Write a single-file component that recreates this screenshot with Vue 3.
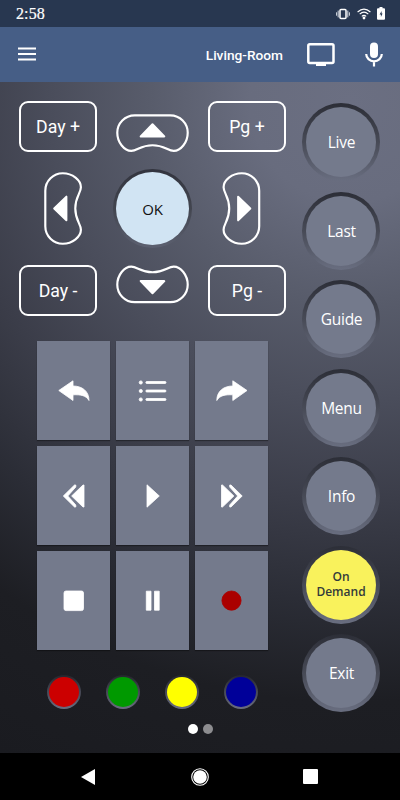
<template>
  <div class="screen">
    <header class="status">
      <span class="clock">2:58</span>
      <div class="status-icons">
        <svg class="vibrate" width="14" height="12" viewBox="0 0 14 12">
          <rect x="4" y="1.5" width="6" height="9" rx="1" fill="none" stroke="#fff" stroke-width="1.5" />
          <path d="M2.2 2.6v6.8M11.8 2.6v6.8M.6 4.3v3.4M13.4 4.3v3.4" stroke="#d9dde4" stroke-width="1" />
        </svg>
        <svg class="wifi" width="14" height="12" viewBox="0 0 14 12">
          <g fill="none" stroke="#fff" stroke-width="1.1">
            <path d="M.6 4Q7-1.9 13.4 4M2.7 6.2Q7 2.2 11.3 6.2M4.8 8.3Q7 6.3 9.2 8.3" />
          </g>
          <circle cx="7" cy="10" r="1.4" fill="#fff" />
        </svg>
        <svg width="8" height="13" viewBox="0 0 8 13">
          <path d="M2.5 0h3v1.2H7q1 0 1 1v9.6q0 1-1 1H1q-1 0-1-1V2.200q0-1 1-1h1.500z" fill="#fff" />
          <path d="M4.600 4L2.600 7.400H3.900V10L5.600 6.500H4.600z" fill="#263650" />
        </svg>
      </div>
    </header>

    <nav class="appbar">
      <svg class="burger" width="18" height="14" viewBox="0 0 18 14">
        <path d="M0 1.5h18M0 7h18M0 12.500h18" stroke="#fff" stroke-width="2" />
      </svg>
      <span class="room">Living-Room</span>
      <svg class="tv" width="28" height="24" viewBox="0 0 28 24">
        <rect x="1.300" y="1.300" width="25.200" height="18.600" rx="1.500" fill="none" stroke="#fff" stroke-width="2.500" />
        <path d="M9 20h10v3H9z" fill="#fff" />
      </svg>
      <svg class="mic" width="18" height="25" viewBox="0 0 18 25">
        <rect x="5" y="0.500" width="8" height="15.500" rx="4" fill="#fff" />
        <path d="M1.200 12a7.800 7.300 0 0 0 15.600 0M9 19v5.500" fill="none" stroke="#fff" stroke-width="2.200" />
      </svg>
    </nav>

    <main class="remote">
      <section class="left">
        <div class="dpad">
          <button class="box">Day +</button>
          <button class="arrow up">
            <svg width="73" height="38.500" viewBox="0 0 74 39"><path :d="bean" class="line" /><path :d="tip" class="tip" /></svg>
          </button>
          <button class="box">Pg +</button>
          <button class="arrow prev">
            <svg width="38.500" height="73" viewBox="0 0 39 74"><g transform="translate(0 74) rotate(-90)"><path :d="bean" class="line" /><path :d="tip" class="tip" /></g></svg>
          </button>
          <button class="ok">OK</button>
          <button class="arrow next">
            <svg width="38.500" height="73" viewBox="0 0 39 74"><g transform="translate(39 0) rotate(90)"><path :d="bean" class="line" /><path :d="tip" class="tip" /></g></svg>
          </button>
          <button class="box">Day -</button>
          <button class="arrow down">
            <svg width="73" height="38.500" viewBox="0 0 74 39"><g transform="translate(0 39) scale(1 -1)"><path :d="bean" class="line" /><path :d="tip" class="tip" /></g></svg>
          </button>
          <button class="box">Pg -</button>
        </div>

        <div class="keys">
          <button v-for="k in keys" :key="k.name" class="key" :aria-label="k.name">
            <svg width="34" height="24" viewBox="0 0 34 24">
              <path :d="k.d" :fill="k.fill || '#fff'" :stroke="k.fill || '#fff'" stroke-width=".8" stroke-linejoin="round" />
            </svg>
          </button>
        </div>

        <div class="colors">
          <button v-for="c in colors" :key="c" class="color" :class="c" :aria-label="c"></button>
        </div>
      </section>

      <aside class="side">
        <button v-for="s in side" :key="s" class="round" :class="{ demand: s === 'On Demand' }"><span>{{ s }}</span></button>
      </aside>

      <div class="pager"><i class="on"></i><i></i></div>
    </main>

    <footer class="sysnav">
      <svg class="back" width="14" height="16" viewBox="0 0 14 16"><path d="M14 0v16L0 8z" fill="#fff" /></svg>
      <svg class="home" width="18" height="18" viewBox="0 0 18 18">
        <circle cx="9" cy="9" r="8.300" fill="none" stroke="#fff" stroke-width="1.100" />
        <circle cx="9" cy="9" r="6.800" fill="#fff" />
      </svg>
      <i class="recent"></i>
    </footer>
  </div>
</template>

<script setup>
const bean = 'M19 1.300H55C65 1.300 72.700 9.500 72.700 19C72.700 29 65.500 37.400 58.500 37.400C52.500 37.400 49 31.700 37 31.700C25 31.700 21.500 37.400 15.500 37.400C8.500 37.400 1.300 29 1.300 19C1.300 9.500 9 1.300 19 1.300Z'
const tip = 'M37 10.300L49 22.700H25Z'
const side = ['Live', 'Last', 'Guide', 'Menu', 'Info', 'On Demand', 'Exit']
const colors = ['red', 'green', 'yellow', 'blue']
const bar = y => `M10.800 ${y - 1}H29a1 1 0 0 1 0 2H10.800a1 1 0 0 1 0 -2z M4.800 ${y - 1.600}a1.600 1.600 0 1 1 0 3.200a1.600 1.600 0 1 1 0 -3.200z`
const keys = [
  { name: 'back', d: 'M1.800 11.500L16 1.800V7C25 7 32 12 32 21.500C29 16.500 24 15.500 16 15.800V21.500Z' },
  { name: 'list', d: bar(3.500) + bar(12) + bar(20.500) },
  { name: 'forward', d: 'M32 11.500L17.800 1.800V7C8.800 7 1.800 12 1.800 21.500C4.800 16.500 9.800 15.500 17.800 15.800V21.500Z' },
  { name: 'rewind', d: 'M27 1V23H26L14.600 12L26 1ZM17.500 1H18.800V3L10.800 12L18.800 21V23H17.500L6.300 12Z' },
  { name: 'play', d: 'M11 .8L23.300 12L11 23.200Z' },
  { name: 'fast forward', d: 'M6.500 1V23H7.500L18.900 12L7.500 1ZM16 1H14.700V3L22.700 12L14.700 21V23H16L27.200 12Z' },
  { name: 'stop', d: 'M9 2H24.500Q26.500 2 26.500 4V19.600Q26.500 21.600 24.500 21.600H9Q7 21.600 7 19.600V4Q7 2 9 2Z' },
  { name: 'pause', d: 'M10.300 2.200H15V21.200H10.300ZM18.500 2.200H23.200V21.200H18.500Z' },
  { name: 'record', d: 'M16.500 2a9.600 9.600 0 1 1 0 19.200a9.600 9.600 0 1 1 0 -19.200z', fill: '#aa0000' }
]
</script>

<style>
body { margin: 0; }
</style>
<style scoped>
.screen { width: 400px; height: 800px; display: flex; flex-direction: column; overflow: hidden; font-family: Roboto, sans-serif; color: #fff; }
button { padding: 0; margin: 0; border: 0; background: none; color: #fff; font-family: inherit; display: block; box-sizing: border-box; }
svg { display: block; flex: none; }
.status { height: 27px; flex: none; background: #283750; display: flex; align-items: center; justify-content: space-between; padding: 0 15px 0 16px; }
.clock { font: 16px/27px "Liberation Serif", serif; letter-spacing: 0.1px; -webkit-text-stroke: 0.2px #fff; }
.status-icons { display: flex; align-items: center; }
.vibrate { margin-right: 7px; }
.wifi { margin-right: 6px; }
.appbar { height: 55px; flex: none; box-sizing: border-box; background: #465e86; display: flex; align-items: center; padding: 0 17px 0 18px; }
.burger { margin-bottom: 1px; }
.room { margin-left: auto; font-size: 13.700px; font-weight: 500; }
.tv { margin: 0 30px 0 24px; }
.remote { height: 671px; flex: none; display: grid; grid-template-columns: 302px 98px; grid-template-rows: 642px 29px; background: radial-gradient(circle at 350px 20px, #6b6f82 0, #686c7e 100px, #585c6b 200px, #4a4d5b 300px, #3b3d49 400px, #2b2d36 500px, #1d1e23 600px, #1a1b20 100%); }
.dpad { display: grid; grid-template-columns: 78px 73px 78px; grid-template-rows: 51px 73px 51px; column-gap: 19px; row-gap: 20px; padding: 19px 0 0 19px; }
.box { border: 2px solid #fff; border-radius: 9px; font-size: 17.700px; }
.line { fill: none; stroke: #fff; stroke-width: 2.200px; }
.tip { fill: #fff; stroke: #fff; stroke-width: 2px; stroke-linejoin: round; }
.up { align-self: end; }
.down { align-self: start; }
.prev { justify-self: center; margin-left: 10px; }
.next { justify-self: center; margin-right: 11px; }
.ok { width: 79px; height: 79px; margin: -3px; border-radius: 50%; border: 3px solid transparent; background: linear-gradient(#d1e4f3, #d1e4f3) padding-box, linear-gradient(#32343e, #42454f 50%, #5c6070) border-box; color: #111; font: 15px "Open Sans", sans-serif; letter-spacing: -0.3px; }
.keys { display: grid; grid-template-columns: repeat(3, 73px); grid-auto-rows: 99px; gap: 6px; padding: 25px 0 0 37px; }
.key { display: grid; place-items: center; background: #747a8c; box-shadow: 0 1px 1px rgba(0, 0, 0, 0.35); }
.colors { display: flex; gap: 25px; padding: 25px 0 0 46.500px; }
.color { width: 34px; height: 34px; border: 2px solid transparent; border-radius: 50%; }
.red { background: linear-gradient(#c00, #c00) padding-box, linear-gradient(#25262d, #6a6d80) border-box; }
.green { background: linear-gradient(#090, #090) padding-box, linear-gradient(#25262d, #6a6d80) border-box; }
.yellow { background: linear-gradient(#ff0, #ff0) padding-box, linear-gradient(#25262d, #6a6d80) border-box; }
.blue { background: linear-gradient(#009, #009) padding-box, linear-gradient(#25262d, #6a6d80) border-box; }
.side { display: flex; flex-direction: column; gap: 10.500px; padding-top: 21px; }
.round { width: 78px; height: 78px; flex: none; border: 4px solid transparent; border-radius: 50%; background: linear-gradient(#747a8c, #747a8c) padding-box, linear-gradient(#2c2e37, #474a56 50%, #696e80) border-box; font: 15.500px "Open Sans", sans-serif; letter-spacing: -0.25px; padding-left: 1px; }
.demand { background: linear-gradient(#f9f25c, #f9f25c) padding-box, linear-gradient(#2c2e37, #474a56 50%, #696e80) border-box; color: #333b3a; font: 600 12px/15px "Open Sans", sans-serif; letter-spacing: 0; padding: 0 8px 2px; }
.pager { grid-column: 1 / -1; display: flex; justify-content: center; gap: 5px; }
.pager i { width: 10px; height: 10px; border-radius: 50%; background: #8d8d90; }
.pager .on { background: #fff; }
.sysnav { flex: 1; background: #000; display: flex; align-items: center; }
.back { margin-left: 81px; }
.home { margin-left: 96px; }
.recent { width: 15px; height: 15px; margin-left: 94px; background: #fff; border-radius: 1px; }
</style>
